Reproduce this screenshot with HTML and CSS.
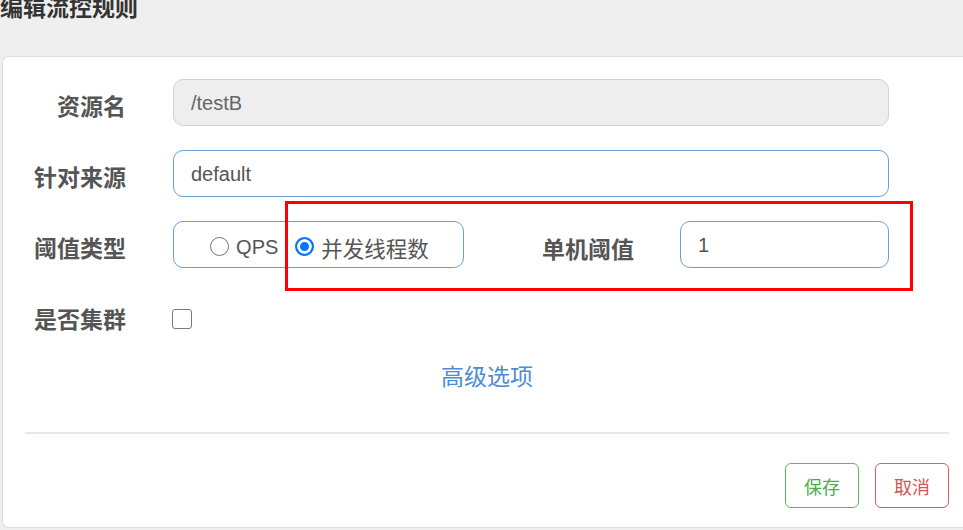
FILE: index.html
```html
<!DOCTYPE html>
<html lang="zh-CN">
<head>
<meta charset="utf-8">
<title>编辑流控规则</title>
<link rel="stylesheet" href="styles.css">
</head>
<body>
<div class="header">
  <h3 class="title">编辑流控规则</h3>
</div>
<div class="panel">
  <form class="form">
    <div class="row">
      <label class="label">资源名</label>
      <div class="control"><input class="input input-disabled" type="text" value="/testB" disabled></div>
    </div>
    <div class="row">
      <label class="label">针对来源</label>
      <div class="control"><input class="input" type="text" value="default"></div>
    </div>
    <div class="row">
      <label class="label">阈值类型</label>
      <div class="control control-split">
        <div class="radio-group">
          <label class="radio"><input type="radio" name="grade" class="radio-input"><span class="radio-text">QPS</span></label>
          <label class="radio"><input type="radio" name="grade" class="radio-input" checked><span class="radio-text radio-cjk">并发线程数</span></label>
        </div>
        <label class="label label-inline">单机阈值</label>
        <input class="input input-small" type="text" value="1">
      </div>
    </div>
    <div class="row">
      <label class="label">是否集群</label>
      <div class="control"><input type="checkbox" class="checkbox"></div>
    </div>
    <div class="advanced"><a class="link" href="#">高级选项</a></div>
  </form>
  <div class="divider"></div>
  <div class="footer">
    <button class="btn btn-save" type="button">保存</button>
    <button class="btn btn-cancel" type="button">取消</button>
  </div>
  <div class="annotation"></div>
</div>
</body>
</html>
```
FILE: styles.css
```css
* { box-sizing: border-box; }
html, body { margin: 0; padding: 0; }
body {
  background: #efefef;
  font-family: "Liberation Sans", "Noto Sans CJK SC", sans-serif;
  color: #555;
  width: 963px;
  height: 530px;
  overflow: hidden;
}
.header {
  height: 56px;
  overflow: hidden;
}
.title {
  margin: -3px 0 0 0;
  font-size: 23px;
  line-height: 23px;
  font-weight: bold;
  color: #333;
}
.panel {
  position: relative;
  margin-left: 2px;
  height: 472px;
  background: #fff;
  border: 1px solid #dcdcdc;
  border-right: none;
  border-radius: 6px 0 0 6px;
  padding-top: 22px;
}
.form { margin: 0; }
.row {
  display: grid;
  grid-template-columns: 123px 716px;
  column-gap: 47px;
  align-items: center;
  height: 47px;
  margin-bottom: 24px;
}
.label {
  font-size: 23px;
  font-weight: bold;
  color: #555;
  text-align: right;
  padding-top: 8px;
  line-height: 24px;
  white-space: nowrap;
}
.control { display: flex; align-items: center; height: 47px; }
.input {
  width: 100%;
  height: 47px;
  border: 1.5px solid #6e9fd3;
  border-radius: 10px;
  padding: 2px 17px 0 17px;
  font-family: inherit;
  font-size: 20px;
  color: #555;
  background: #fff;
  outline: none;
}
.input-disabled {
  background: #eee;
  border-color: #d3d3d3;
  color: #666;
}
.control-split { display: flex; }
.radio-group {
  width: 291px;
  flex: none;
  height: 47px;
  border: 1.5px solid #6e9fd3;
  border-radius: 10px;
  display: flex;
  align-items: center;
  justify-content: center;
  gap: 17px;
  padding-left: 2px;
}
.radio {
  display: flex;
  align-items: center;
  gap: 7px;
  font-size: 20px;
  color: #555;
  padding-top: 3px;
}
.radio-text { padding-top: 2px; }
.radio-cjk { font-size: 21.5px; }
.radio-input {
  appearance: none;
  -webkit-appearance: none;
  margin: 0;
  width: 19px;
  height: 19px;
  border-radius: 50%;
  border: 1.5px solid #767676;
  background: #fff;
}
.radio-input:checked {
  border: 2px solid #0075ff;
  background: #0075ff;
  box-shadow: inset 0 0 0 3px #fff;
}
.label-inline {
  flex: 1;
  padding-top: 10px;
  margin-right: 46px;
}
.input-small { width: 209px; flex: none; }
.checkbox {
  appearance: none;
  -webkit-appearance: none;
  margin: 6px 0 0 -1px;
  width: 20px;
  height: 20px;
  border: 1.5px solid #7a7a7a;
  border-radius: 3px;
  background: #fff;
}
.advanced {
  text-align: center;
  margin: 0 14px 0 22px;
  line-height: 30px;
  height: 30px;
  position: relative;
  top: -1px;
}
.link {
  color: #4b8dd1;
  font-size: 23px;
  text-decoration: none;
}
.divider {
  margin: 39px 14px 0 22px;
  height: 2px;
  background: #e8e8e8;
}
.footer {
  display: flex;
  justify-content: flex-end;
  gap: 16px;
  margin: 29px 14px 0 0;
}
.btn {
  width: 74px;
  height: 45px;
  background: #fff;
  border-radius: 6px;
  font-family: inherit;
  font-size: 18px;
  padding: 0;
}
.btn-save { border: 1.5px solid #5cb85c; color: #4cae4c; }
.btn-cancel { border: 1.5px solid #e05a64; color: #d9534f; }
.annotation {
  position: absolute;
  left: 282px;
  top: 144px;
  width: 628px;
  height: 90px;
  border: 3px solid #ff0000;
  pointer-events: none;
}
```
